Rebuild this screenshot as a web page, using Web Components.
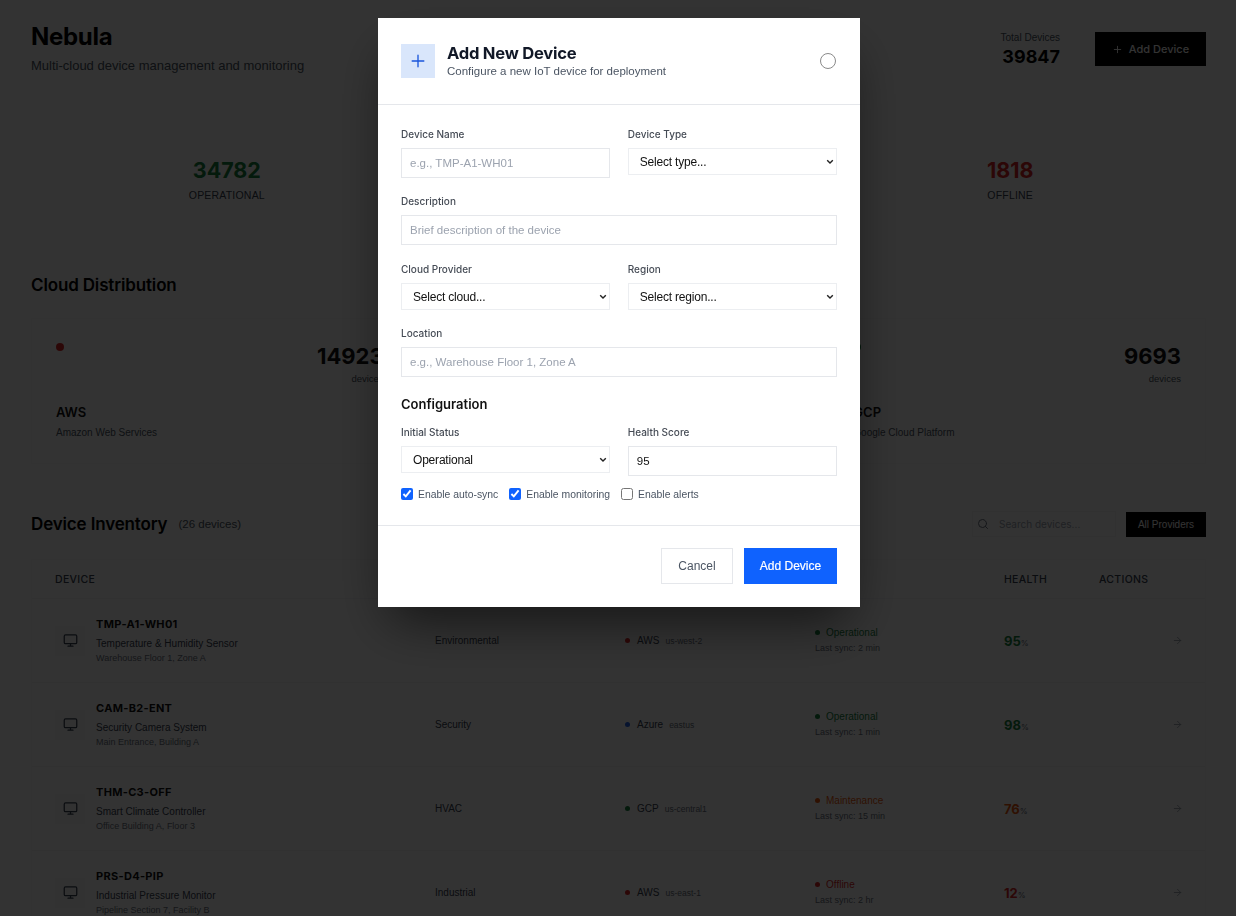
<!DOCTYPE html>
<html lang="en">
<head>
<meta charset="utf-8">
<title>Nebula</title>
<style>
html,body{margin:0;padding:0;height:100%;overflow:hidden;background:#fff;font-family:Inter,"Liberation Sans",sans-serif;color:#111}
</style>
</head>
<body>
<nebula-app></nebula-app>
<script>
const SANS = '"Liberation Sans",Arial,sans-serif';
const ICON = {
  monitor:'<svg width="15" height="15" viewBox="0 0 24 24" fill="none" stroke="currentColor" stroke-width="2" stroke-linecap="round" stroke-linejoin="round"><rect x="2" y="3" width="20" height="14" rx="2"/><path d="M8 21h8M12 17v4"/></svg>',
  arrow:'<svg width="11" height="11" viewBox="0 0 24 24" fill="none" stroke="currentColor" stroke-width="2" stroke-linecap="round" stroke-linejoin="round"><path d="M5 12h14M12 5l7 7-7 7"/></svg>',
  search:'<svg width="12" height="12" viewBox="0 0 24 24" fill="none" stroke="currentColor" stroke-width="2" stroke-linecap="round" stroke-linejoin="round"><circle cx="11" cy="11" r="8"/><path d="m21 21-4.3-4.3"/></svg>',
  plus:'<svg viewBox="0 0 24 24" fill="none" stroke="currentColor" stroke-width="2" stroke-linecap="round" stroke-linejoin="round"><path d="M5 12h14M12 5v14"/></svg>'
};
const base = (cls, html) => class extends HTMLElement {
  constructor(){ super(); this.attachShadow({mode:'open'}); }
  connectedCallback(){ this.shadowRoot.innerHTML = html(this); }
};
const a = (el, n) => el.getAttribute(n) || '';

customElements.define('page-header', base('h', () => `<style>
:host{display:flex;justify-content:space-between;align-items:flex-start}
h1{margin:0;font-size:24px;line-height:30px;font-weight:700;letter-spacing:-.3px;color:#000;margin-top:4px}
p{margin:6px 0 0;font-family:${SANS};font-size:13px;line-height:16px;color:#4b5563}
.right{display:flex;align-items:flex-start;gap:35px;margin-top:14px}
.tot{text-align:right;margin-top:-1px}
.tl{font-family:${SANS};font-size:10px;line-height:13px;color:#4b5563}
.tn{font-size:18px;line-height:22px;font-weight:700;color:#000;margin-top:2px}
button{all:unset;box-sizing:border-box;width:111px;height:34px;background:#000;color:#fff;display:flex;align-items:center;justify-content:center;gap:6px;font-size:11px;font-weight:500}
svg{width:11px;height:11px}
</style>
<div><h1>Nebula</h1><p>Multi-cloud device management and monitoring</p></div>
<div class="right"><div class="tot"><div class="tl">Total Devices</div><div class="tn">39847</div></div>
<button>${ICON.plus}<span>Add Device</span></button></div>`));

customElements.define('stat-item', base('s', el => `<style>
:host{display:block;text-align:center}
.n{font-size:21.5px;line-height:28px;font-weight:700;color:${a(el,'color')}}
.l{font-family:${SANS};font-size:10.5px;line-height:14px;letter-spacing:.2px;color:#374151;margin-top:4px}
</style><div class="n">${a(el,'value')}</div><div class="l">${a(el,'label')}</div>`));

customElements.define('cloud-card', base('c', el => `<style>
:host{display:block;box-sizing:border-box;height:146px;border:1px solid #f8f9fa;padding:23px 24px}
.top{display:flex;justify-content:space-between;align-items:flex-start}
.dot{width:8px;height:8px;border-radius:50%;background:${a(el,'color')};margin-top:1px}
.num{text-align:right}
.n{font-size:22px;line-height:28px;font-weight:700;color:#111}
.d{font-family:${SANS};font-size:9.5px;line-height:12px;color:#4b5563;margin-top:3px}
.name{font-size:13px;line-height:16px;font-weight:600;color:#111;margin-top:19px}
.desc{font-family:${SANS};font-size:10px;line-height:13px;color:#4b5563;margin-top:6px}
</style><div class="top"><span class="dot"></span><div class="num"><div class="n">${a(el,'count')}</div><div class="d">devices</div></div></div>
<div class="name">${a(el,'name')}</div><div class="desc">${a(el,'desc')}</div>`));

const COLS = 'grid-template-columns:380px 190px 190px 189px 95px 1fr';

customElements.define('device-row', base('r', el => `<style>
:host{display:grid;${COLS};height:84px;align-items:center;border-bottom:1px solid #f3f4f6;box-sizing:border-box;padding:0 24px 0 23px;font-family:${SANS}}
.dev{display:flex;align-items:center;gap:11px}
.ic{width:30px;height:30px;background:#f9fafb;color:#374151;display:flex;align-items:center;justify-content:center}
.id{font-family:Inter,sans-serif;font-size:11px;line-height:14px;font-weight:700;letter-spacing:.3px;color:#111}
.nm{font-size:10px;line-height:13px;color:#374151;margin-top:6px}
.lc{font-size:9px;line-height:11px;color:#6b7280;margin-top:3px}
.ty{font-size:10px;color:#374151}
.pr{display:flex;align-items:center;font-size:10px;color:#374151}
.pd{width:5px;height:5px;border-radius:50%;background:${a(el,'pcolor')};margin:0 7px 0 0}
.rg{font-size:8.5px;color:#6b7280;margin-left:6px}
.st{font-size:10px;line-height:13px;color:${a(el,'scolor')};display:flex;align-items:center;gap:6px}
.sd{width:5px;height:5px;border-radius:50%;background:${a(el,'scolor')}}
.sy{font-size:9px;line-height:11px;color:#6b7280;margin-top:4px}
.he{font-family:Inter,sans-serif;font-size:13px;font-weight:700;color:${a(el,'scolor')}}
.he small{font-size:8px;font-weight:400;color:#6b7280}
.ar{color:#9ca3af;display:flex;justify-content:flex-end;margin-right:-2px}
.sw{margin-top:-1px}
</style>
<div class="dev"><div class="ic">${ICON.monitor}</div><div><div class="id">${a(el,'did')}</div><div class="nm">${a(el,'dname')}</div><div class="lc">${a(el,'loc')}</div></div></div>
<div class="ty">${a(el,'dtype')}</div>
<div class="pr"><span class="pd"></span><span>${a(el,'prov')}</span><span class="rg">${a(el,'region')}</span></div>
<div class="sw"><div class="st"><span class="sd"></span>${a(el,'status')}</div><div class="sy">${a(el,'sync')}</div></div>
<div class="he">${a(el,'health')}<small>%</small></div>
<div class="ar">${ICON.arrow}</div>`));

customElements.define('device-table', base('t', () => `<style>
:host{display:block;border:1px solid #f8f9fa;border-bottom:0}
.head{display:grid;${COLS};height:38px;align-items:center;padding:0 24px 0 23px;border-bottom:1px solid #f3f4f6;font-size:10.5px;font-weight:500;letter-spacing:.3px;color:#374151}
</style><div class="head"><span>DEVICE</span><span>TYPE</span><span>PROVIDER</span><span>STATUS</span><span>HEALTH</span><span>ACTIONS</span></div><slot></slot>`));

customElements.define('form-field', base('f', el => `<style>
:host{display:block;min-width:0}
label{display:block;font-size:10px;line-height:13px;font-weight:500;color:#454b55;margin-bottom:7px}
</style><label>${a(el,'label')}</label><slot></slot>`));

customElements.define('check-option', base('k', el => `<style>
:host{display:inline-flex;align-items:center;gap:5px;font-family:${SANS};font-size:10.4px;color:#4b5563}
input{width:12px;height:12px;margin:0;accent-color:#0f62fe}
</style><input type="checkbox" ${el.hasAttribute('checked')?'checked':''}><span><slot></slot></span>`));

const CHEV = "data:image/svg+xml," + encodeURIComponent('<svg xmlns="http://www.w3.org/2000/svg" width="8" height="6" viewBox="0 0 8 6"><path d="M1.2 1.2 4 4 6.8 1.2" fill="none" stroke="#222" stroke-width="1.4"/></svg>');

customElements.define('add-device-modal', base('m', () => `<style>
:host{display:block;width:482px;height:589px;box-sizing:border-box;background:#fff;box-shadow:0 25px 50px -12px rgba(0,0,0,.6);color:#111}
header{height:87px;box-sizing:border-box;border-bottom:1px solid #e5e7eb;display:flex;align-items:center;padding:0 23px;gap:12px}
.pi{width:34px;height:34px;background:#d9e6fb;color:#1a56db;display:flex;align-items:center;justify-content:center}
.pi svg{width:20px;height:20px;stroke-width:1.6}
.ht{flex:1}
h2{margin:0;font-size:16.6px;line-height:20px;font-weight:700;color:#111827;letter-spacing:-.25px}
.ht p{margin:1px 0 0;font-family:${SANS};font-size:11.5px;line-height:15px;color:#4b5563}
.close{width:16px;height:16px;border-radius:50%;border:1.5px solid #8a8a8a;box-sizing:border-box;background:#fff;padding:0;margin-right:1px}
.body{padding:23px 23px 0;display:flex;flex-direction:column;gap:17px}
.two{display:grid;grid-template-columns:1fr 1fr;gap:17.5px;align-items:start}
.shift{margin-top:1px}
input.t{display:block;box-sizing:border-box;width:100%;height:30px;border:1px solid #e5e7eb;border-radius:0;padding:0 8px;font:11.5px ${SANS};color:#111;outline:0;background:#fff}
input.t::placeholder{color:#9ca3af}
select{display:block;box-sizing:border-box;width:100%;height:27px;border:1px solid #eceef1;border-radius:0;padding:0 0 0 11px;font:12px ${SANS};letter-spacing:-.2px;color:#111;appearance:none;-webkit-appearance:none;background:#fff url('${CHEV}') no-repeat right 2px center}
h3{margin:0;font-size:13px;line-height:16px;font-weight:600;color:#111;margin-top:2px}
.cfg{margin-top:-3px}
.checks{display:flex;gap:11px;margin-top:-5px}
footer{border-top:1px solid #e5e7eb;margin-top:25px;padding:22px 23px 0;display:flex;justify-content:flex-end;gap:11px}
button{box-sizing:border-box;height:36px;font:12px ${SANS};border-radius:0;padding:0}
.c{width:72px;background:#fff;border:1px solid #e5e7eb;color:#4b5563}
.p{width:93px;background:#0f62fe;border:0;color:#fff;-webkit-text-stroke:.2px #fff}
</style>
<header><div class="pi">${ICON.plus}</div><div class="ht"><h2>Add New Device</h2><p>Configure a new IoT device for deployment</p></div><button class="close" aria-label="Close"></button></header>
<div class="body">
<div class="two"><form-field label="Device Name"><input class="t" placeholder="e.g., TMP-A1-WH01"></form-field>
<form-field label="Device Type"><select><option>Select type...</option></select></form-field></div>
<form-field label="Description"><input class="t" placeholder="Brief description of the device"></form-field>
<div class="two shift"><form-field label="Cloud Provider"><select><option>Select cloud...</option></select></form-field>
<form-field label="Region"><select><option>Select region...</option></select></form-field></div>
<form-field label="Location"><input class="t" placeholder="e.g., Warehouse Floor 1, Zone A"></form-field>
<h3>Configuration</h3>
<div class="two cfg"><form-field label="Initial Status"><select><option>Operational</option></select></form-field>
<form-field label="Health Score"><input class="t" value="95"></form-field></div>
<div class="checks"><check-option checked>Enable auto-sync</check-option><check-option checked>Enable monitoring</check-option><check-option>Enable alerts</check-option></div>
</div>
<footer><button class="c">Cancel</button><button class="p">Add Device</button></footer>`));

customElements.define('modal-overlay', base('o', () => `<style>
:host{position:fixed;inset:0;background:rgba(0,0,0,.8);backdrop-filter:blur(.5px);display:flex;justify-content:center;align-items:flex-start;padding:18px 0 0 2px;box-sizing:border-box}
</style><slot></slot>`));

customElements.define('nebula-app', base('a', () => `<style>
:host{display:block;height:916px;overflow:hidden;box-sizing:border-box;padding:18px 30px 0 31px}
.stats{display:grid;grid-template-columns:repeat(3,1fr);margin-top:82px}
h2{margin:0;font-size:17px;line-height:22px;font-weight:600;color:#000;letter-spacing:-.15px}
.cd{margin-top:72px}
.cards{display:grid;grid-template-columns:repeat(3,1fr);gap:21px;margin-top:22px}
.invh{display:flex;align-items:center;margin-top:47px;height:26px}
.cnt{font-family:${SANS};font-size:11.5px;color:#4b5563;margin-left:11px}
.sp{flex:1}
.search{width:144px;height:26px;box-sizing:border-box;border:1px solid #f4f5f6;display:flex;align-items:center;gap:10px;padding:0 4px;font-size:10px;color:#9ca3af}
.search svg{color:#6b7280}
.ap{margin-left:10px;width:80px;height:25px;background:#000;color:#fff;font-family:${SANS};font-size:10px;display:flex;align-items:center;justify-content:center}
device-table{margin-top:22px}
</style>
<page-header></page-header>
<div class="stats"><stat-item value="34782" label="OPERATIONAL" color="#15803d"></stat-item><stat-item value="3247" label="MAINTENANCE" color="#ea580c"></stat-item><stat-item value="1818" label="OFFLINE" color="#dc2626"></stat-item></div>
<h2 class="cd">Cloud Distribution</h2>
<div class="cards"><cloud-card name="AWS" desc="Amazon Web Services" count="14923" color="#dc2626"></cloud-card><cloud-card name="Azure" desc="Microsoft Azure" count="15231" color="#2563eb"></cloud-card><cloud-card name="GCP" desc="Google Cloud Platform" count="9693" color="#15803d"></cloud-card></div>
<div class="invh"><h2>Device Inventory</h2><span class="cnt">(26 devices)</span><span class="sp"></span><div class="search">${ICON.search}<span>Search devices...</span></div><div class="ap">All Providers</div></div>
<device-table>
<device-row did="TMP-A1-WH01" dname="Temperature &amp; Humidity Sensor" loc="Warehouse Floor 1, Zone A" dtype="Environmental" prov="AWS" region="us-west-2" pcolor="#dc2626" status="Operational" sync="Last sync: 2 min" scolor="#15803d" health="95"></device-row>
<device-row did="CAM-B2-ENT" dname="Security Camera System" loc="Main Entrance, Building A" dtype="Security" prov="Azure" region="eastus" pcolor="#2563eb" status="Operational" sync="Last sync: 1 min" scolor="#15803d" health="98"></device-row>
<device-row did="THM-C3-OFF" dname="Smart Climate Controller" loc="Office Building A, Floor 3" dtype="HVAC" prov="GCP" region="us-central1" pcolor="#15803d" status="Maintenance" sync="Last sync: 15 min" scolor="#ea580c" health="76"></device-row>
<device-row did="PRS-D4-PIP" dname="Industrial Pressure Monitor" loc="Pipeline Section 7, Facility B" dtype="Industrial" prov="AWS" region="us-east-1" pcolor="#dc2626" status="Offline" sync="Last sync: 2 hr" scolor="#dc2626" health="12"></device-row>
</device-table>
<modal-overlay><add-device-modal></add-device-modal></modal-overlay>`));
</script>
</body>
</html>
